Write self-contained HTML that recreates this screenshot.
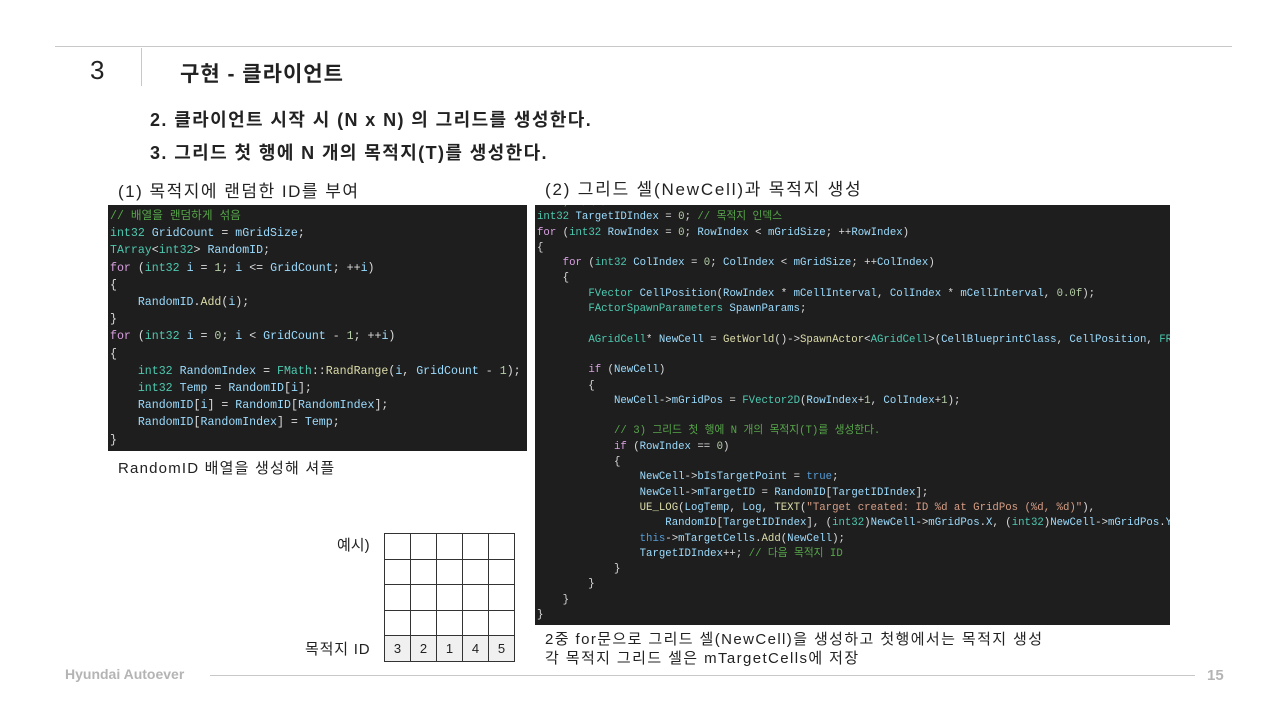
<!DOCTYPE html>
<html><head><meta charset="utf-8"><style>
body{margin:0;width:1280px;height:720px;background:#fff;position:relative;overflow:hidden;font-family:"Liberation Sans","Noto Sans CJK KR",sans-serif;color:#222}
.a{position:absolute;white-space:nowrap}
.code{position:absolute;background:#1e1e1e;overflow:hidden;font-family:"Liberation Mono","Noto Sans CJK KR",monospace;color:#dcdcdc}
.code pre{margin:0;font-family:inherit;white-space:pre}
.k{color:#d8a0df}.t{color:#4ec9b0}.v{color:#9cdcfe}.c{color:#57a64a}.f{color:#dcdcaa}.n{color:#b5cea8}.s{color:#d69d85}.b{color:#569cd6}
table{border-collapse:collapse;position:absolute;left:384px;top:533px;table-layout:fixed;width:131px}
td{border:1.5px solid #333;height:24.5px;padding:0;text-align:center;font-size:13px}
</style></head><body>
<div class="a" style="left:55px;top:46px;width:1177px;height:1px;background:#c8c8c8"></div>
<div class="a" style="left:141px;top:48px;width:1px;height:38px;background:#c8c8c8"></div>
<div class="a" style="left:90px;top:55px;font-size:26px">3</div>
<div class="a" style="left:180px;top:58px;font-size:21px;font-weight:bold;letter-spacing:1px;color:#222">구현 - 클라이언트</div>
<div class="a" style="left:150px;top:106px;font-size:18px;font-weight:bold;letter-spacing:1.4px">2. 클라이언트 시작 시 (N x N) 의 그리드를 생성한다.</div>
<div class="a" style="left:150px;top:139px;font-size:18px;font-weight:bold;letter-spacing:1.4px">3. 그리드 첫 행에 N 개의 목적지(T)를 생성한다.</div>
<div class="a" style="left:118px;top:177px;font-size:17px;letter-spacing:1.5px">(1) 목적지에 랜덤한 ID를 부여</div>
<div class="a" style="left:545px;top:175px;font-size:17px;letter-spacing:1.8px">(2) 그리드 셀(NewCell)과 목적지 생성</div>

<div class="code" style="left:108px;top:205px;width:419px;height:246px;font-size:11.6px;line-height:17.2px;padding-top:3px;box-sizing:border-box">
<pre style="padding-left:2px"><span class="c">// 배열을 랜덤하게 섞음</span>
<span class="t">int32</span> <span class="v">GridCount</span> = <span class="v">mGridSize</span>;
<span class="t">TArray</span>&lt;<span class="t">int32</span>&gt; <span class="v">RandomID</span>;
<span class="k">for</span> (<span class="t">int32</span> <span class="v">i</span> = <span class="n">1</span>; <span class="v">i</span> &lt;= <span class="v">GridCount</span>; ++<span class="v">i</span>)
{
    <span class="v">RandomID</span>.<span class="f">Add</span>(<span class="v">i</span>);
}
<span class="k">for</span> (<span class="t">int32</span> <span class="v">i</span> = <span class="n">0</span>; <span class="v">i</span> &lt; <span class="v">GridCount</span> - <span class="n">1</span>; ++<span class="v">i</span>)
{
    <span class="t">int32</span> <span class="v">RandomIndex</span> = <span class="t">FMath</span>::<span class="f">RandRange</span>(<span class="v">i</span>, <span class="v">GridCount</span> - <span class="n">1</span>);
    <span class="t">int32</span> <span class="v">Temp</span> = <span class="v">RandomID</span>[<span class="v">i</span>];
    <span class="v">RandomID</span>[<span class="v">i</span>] = <span class="v">RandomID</span>[<span class="v">RandomIndex</span>];
    <span class="v">RandomID</span>[<span class="v">RandomIndex</span>] = <span class="v">Temp</span>;
}</pre></div>
<div class="a" style="left:118px;top:457px;font-size:15px;letter-spacing:1.2px">RandomID 배열을 생성해 셔플</div>

<div class="code" style="left:535px;top:205px;width:635px;height:420px;font-size:10.7px;line-height:15.3px">
<pre style="padding-left:2px;margin-top:-10px"><span class="c">// 1) 목적지 ID</span>
<span class="t">int32</span> <span class="v">TargetIDIndex</span> = <span class="n">0</span>; <span class="c">// 목적지 인덱스</span>
<span class="k">for</span> (<span class="t">int32</span> <span class="v">RowIndex</span> = <span class="n">0</span>; <span class="v">RowIndex</span> &lt; <span class="v">mGridSize</span>; ++<span class="v">RowIndex</span>)
{
    <span class="k">for</span> (<span class="t">int32</span> <span class="v">ColIndex</span> = <span class="n">0</span>; <span class="v">ColIndex</span> &lt; <span class="v">mGridSize</span>; ++<span class="v">ColIndex</span>)
    {
        <span class="t">FVector</span> <span class="v">CellPosition</span>(<span class="v">RowIndex</span> * <span class="v">mCellInterval</span>, <span class="v">ColIndex</span> * <span class="v">mCellInterval</span>, <span class="n">0.0f</span>);
        <span class="t">FActorSpawnParameters</span> <span class="v">SpawnParams</span>;

        <span class="t">AGridCell</span>* <span class="v">NewCell</span> = <span class="f">GetWorld</span>()-&gt;<span class="f">SpawnActor</span>&lt;<span class="t">AGridCell</span>&gt;(<span class="v">CellBlueprintClass</span>, <span class="v">CellPosition</span>, <span class="t">FRotator</span>);

        <span class="k">if</span> (<span class="v">NewCell</span>)
        {
            <span class="v">NewCell</span>-&gt;<span class="v">mGridPos</span> = <span class="t">FVector2D</span>(<span class="v">RowIndex</span>+<span class="n">1</span>, <span class="v">ColIndex</span>+<span class="n">1</span>);

            <span class="c">// 3) 그리드 첫 행에 N 개의 목적지(T)를 생성한다.</span>
            <span class="k">if</span> (<span class="v">RowIndex</span> == <span class="n">0</span>)
            {
                <span class="v">NewCell</span>-&gt;<span class="v">bIsTargetPoint</span> = <span class="b">true</span>;
                <span class="v">NewCell</span>-&gt;<span class="v">mTargetID</span> = <span class="v">RandomID</span>[<span class="v">TargetIDIndex</span>];
                <span class="f">UE_LOG</span>(<span class="v">LogTemp</span>, <span class="v">Log</span>, <span class="f">TEXT</span>(<span class="s">"Target created: ID %d at GridPos (%d, %d)"</span>),
                    <span class="v">RandomID</span>[<span class="v">TargetIDIndex</span>], (<span class="t">int32</span>)<span class="v">NewCell</span>-&gt;<span class="v">mGridPos</span>.<span class="v">X</span>, (<span class="t">int32</span>)<span class="v">NewCell</span>-&gt;<span class="v">mGridPos</span>.<span class="v">Y</span>);
                <span class="b">this</span>-&gt;<span class="v">mTargetCells</span>.<span class="f">Add</span>(<span class="v">NewCell</span>);
                <span class="v">TargetIDIndex</span>++; <span class="c">// 다음 목적지 ID</span>
            }
        }
    }
}</pre></div>
<div class="a" style="left:545px;top:630px;font-size:15px;line-height:19px;letter-spacing:1.4px">2중 for문으로 그리드 셀(NewCell)을 생성하고 첫행에서는 목적지 생성<br>각 목적지 그리드 셀은 mTargetCells에 저장</div>

<div class="a" style="left:337px;top:534px;font-size:15px">예시)</div>
<div class="a" style="left:305px;top:638px;font-size:15px;letter-spacing:0.8px">목적지 ID</div>
<table>
<tr><td></td><td></td><td></td><td></td><td></td></tr>
<tr><td></td><td></td><td></td><td></td><td></td></tr>
<tr><td></td><td></td><td></td><td></td><td></td></tr>
<tr><td></td><td></td><td></td><td></td><td></td></tr>
<tr style="background:#f0f0f0"><td>3</td><td>2</td><td>1</td><td>4</td><td>5</td></tr>
</table>

<div class="a" style="left:65px;top:666px;font-size:14px;font-weight:bold;color:#b4b4b4">Hyundai Autoever</div>
<div class="a" style="left:210px;top:675px;width:985px;height:1px;background:#c8c8c8"></div>
<div class="a" style="left:1207px;top:667px;font-size:15px;font-weight:bold;color:#b4b4b4">15</div>
</body></html>
